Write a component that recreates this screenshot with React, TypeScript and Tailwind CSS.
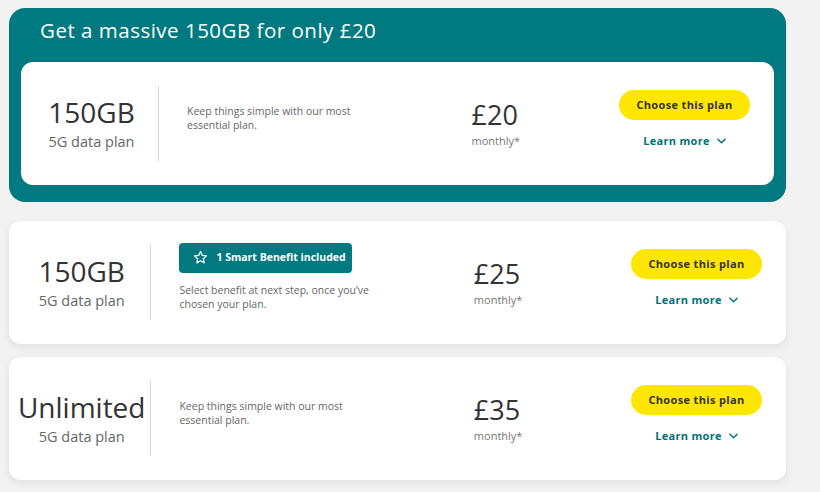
import { ReactNode } from 'react';

type Plan = {
  size: string;
  desc: string;
  price: string;
  badge?: boolean;
};

const plans: Plan[] = [
  { size: '150GB', desc: 'Select benefit at next step, once you\u2019ve chosen your plan.', price: '£25', badge: true },
  { size: 'Unlimited', desc: 'Keep things simple with our most essential plan.', price: '£35' },
];

function Star() {
  return (
    <svg width="15" height="15" viewBox="0 0 24 24" fill="none" stroke="white" strokeWidth="2" strokeLinejoin="round">
      <path d="M12 2.5l2.9 6.1 6.6.8-4.9 4.6 1.3 6.6L12 17.3l-5.9 3.3 1.3-6.6-4.9-4.6 6.6-.8z" />
    </svg>
  );
}

function Chevron() {
  return (
    <svg width="9" height="6" viewBox="0 0 10 6" fill="none" stroke="#00737a" strokeWidth="1.6" strokeLinecap="round" strokeLinejoin="round">
      <path d="M1 1l4 4 4-4" />
    </svg>
  );
}

function PlanCard({ plan, children }: { plan: Plan; children?: ReactNode }) {
  return (
    <div className="flex items-center h-[123px] py-6 bg-white rounded-xl">
      <div className="w-[18.2%] pl-1 flex flex-col items-center">
        <span className="text-[28px] leading-[32px] text-[#333]">{plan.size}</span>
        <span className="text-[14.5px] leading-5 mt-1 text-[#666]">5G data plan</span>
      </div>
      <div className="w-px self-stretch bg-[#d6d6d6]" />
      <div className="w-[41.5%] pl-7 pr-4 pb-3 flex flex-col">
        {plan.badge && (
          <div className="mb-[10px] flex items-center gap-2 w-[173px] h-[30px] pl-[14px] rounded bg-[#007a80] text-white text-[10.5px] font-bold">
            <Star />
            <span>1 Smart Benefit included</span>
          </div>
        )}
        <p className="text-[10.5px] leading-[14px] text-[#666] max-w-[205px]">{plan.desc}</p>
        {children}
      </div>
      <div className="flex-1 flex flex-col">
        <span className="text-[27px] leading-[30px] text-[#333]">{plan.price}</span>
        <span className="mt-1 text-[11px] leading-[14px] text-[#777]">monthly*</span>
      </div>
      <div className="w-[131px] mr-6 pb-2 flex flex-col items-center">
        <button className="w-full h-[30px] rounded-full bg-[#ffe600] text-[11px] font-bold tracking-[0.35px] text-[#333]">Choose this plan</button>
        <div className="mt-[13px] flex items-center gap-[7px] text-[11px] font-bold tracking-[0.3px] text-[#00737a]">
          <span>Learn more</span>
          <Chevron />
        </div>
      </div>
    </div>
  );
}

export default function App() {
  return (
    <div className="min-h-screen bg-[#f2f2f2] pt-2 pl-[9px] font-['Open_Sans',sans-serif]">
      <div className="w-[777px]">
        <section className="rounded-2xl bg-[#007a80] px-3 pb-[17px]">
          <h1 className="h-[54px] pl-[19px] pb-[9px] flex items-center text-[20.5px] font-medium tracking-[0.5px] text-white">Get a massive 150GB for only £20</h1>
          <PlanCard plan={{ size: '150GB', desc: 'Keep things simple with our most essential plan.', price: '£20' }} />
        </section>
        <div className="mt-[19px] flex flex-col gap-[13px]">
          {plans.map(p => (
            <div key={p.price} className="rounded-xl shadow-[0_3px_8px_rgba(0,0,0,0.08)]">
              <PlanCard plan={p} />
            </div>
          ))}
        </div>
      </div>
    </div>
  );
}
